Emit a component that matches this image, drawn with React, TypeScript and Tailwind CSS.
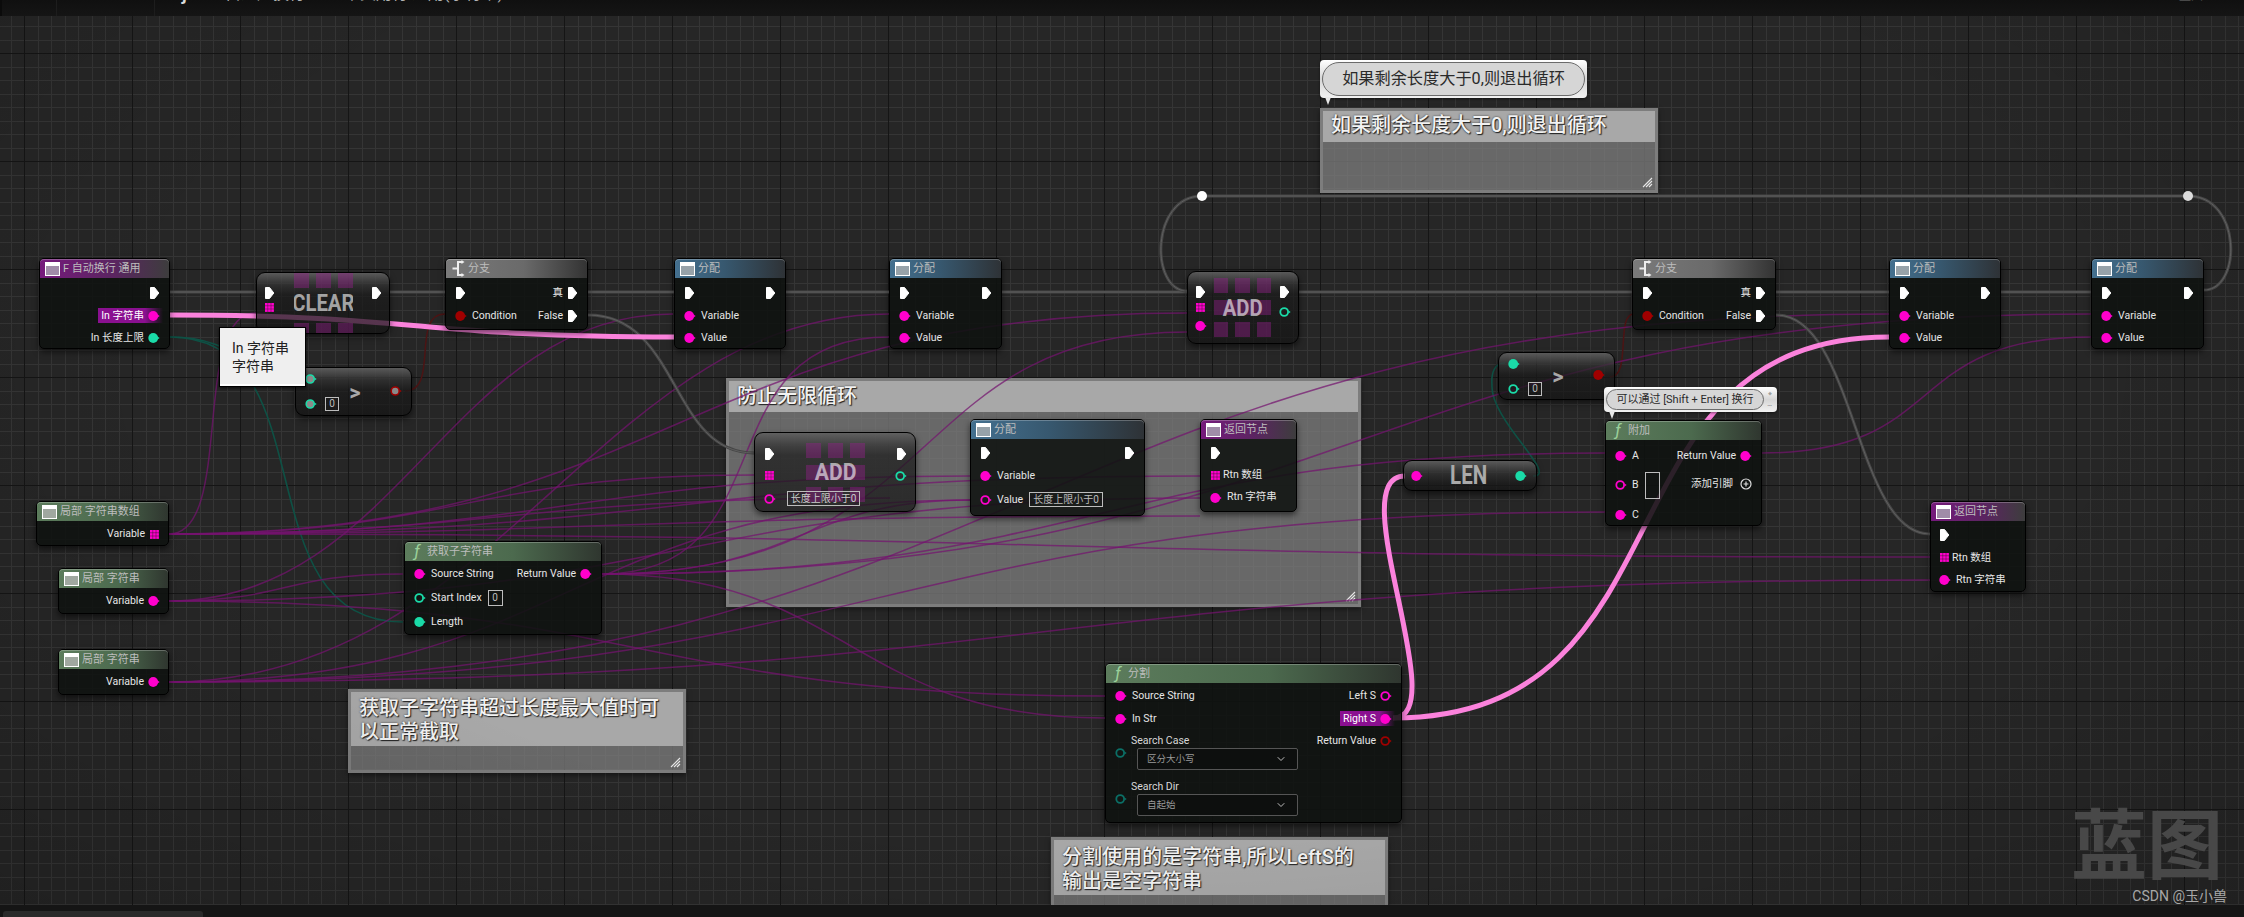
import React from "react";
import { ChevronDown } from "lucide-react";

const MAGENTA = "#ff00cc";
const TEAL = "#1adba8";
const RED = "#a00000";
const DIMTEAL = "#0b6f66";

type PinKind = "exec" | "solid" | "ring" | "gray" | "array" | "plus";

function Pin({ kind, color = MAGENTA }: { kind: PinKind; color?: string }) {
  if (kind === "exec")
    return (
      <svg width="11" height="14" viewBox="0 0 11 14" className="shrink-0">
        <path d="M1.5 1.5H5.5L9.8 7L5.5 12.5H1.5Z" fill="#fff" stroke="#fff" strokeLinejoin="round" />
      </svg>
    );
  if (kind === "array")
    return (
      <svg width="11" height="11" viewBox="0 0 11 11" className="shrink-0">
        {[0, 1, 2].map((r) =>
          [0, 1, 2].map((c) => <rect key={`${r}${c}`} x={1 + c * 3.1} y={1 + r * 3.1} width="2.7" height="2.7" fill={color} />)
        )}
      </svg>
    );
  if (kind === "plus")
    return (
      <svg width="12" height="12" viewBox="0 0 12 12" className="shrink-0">
        <circle cx="6" cy="6" r="5" fill="none" stroke="#ddd" strokeWidth="1.2" />
        <path d="M6 3.6V8.4M3.6 6H8.4" stroke="#ddd" strokeWidth="1.2" />
      </svg>
    );
  return (
    <svg width="12" height="12" viewBox="0 0 12 12" className="shrink-0">
      <path d="M9.6 4.4L11.6 6L9.6 7.6Z" fill={color} />
      {kind === "solid" && <circle cx="5.2" cy="6" r="4.9" fill={color} />}
      {kind === "ring" && <circle cx="5.2" cy="6" r="3.9" fill="none" stroke={color} strokeWidth="1.8" />}
      {kind === "gray" && <circle cx="5.2" cy="6" r="4" fill="#8a8a8a" stroke={color} strokeWidth="1.6" />}
    </svg>
  );
}

function ValueBox({ children, className = "" }: { children?: React.ReactNode; className?: string }) {
  return (
    <div className={`flex items-center justify-center border border-[#bdbdbd] text-[10px] leading-none text-[#bdbdbd] whitespace-nowrap ${className}`}>
      {children}
    </div>
  );
}

function Label({ children, className = "" }: { children: React.ReactNode; className?: string }) {
  return <span className={`text-[10.5px] leading-none text-[#e6e6e6] whitespace-nowrap ${className}`}>{children}</span>;
}

function Row({ children, className = "h-[22.5px]" }: { children: React.ReactNode; className?: string }) {
  return <div className={`flex items-center justify-between ${className}`}>{children}</div>;
}

function In({ kind, color, children }: { kind: PinKind; color?: string; children?: React.ReactNode }) {
  return (
    <div className="flex items-center gap-[5px]">
      <Pin kind={kind} color={color} />
      {children}
    </div>
  );
}

function Out({ kind, color, label, hi }: { kind: PinKind; color?: string; label?: string; hi?: boolean }) {
  return (
    <div
      className={`flex items-center gap-[4px] ${
        hi ? "-mr-[3px] pr-[3px] -ml-[3px] pl-[3px] h-[15px] bg-[linear-gradient(90deg,#8a1090,#8a1090_72%,rgba(138,16,144,0))]" : ""
      }`}
    >
      {label && <Label className={hi ? "text-white" : ""}>{label}</Label>}
      <Pin kind={kind} color={color} />
    </div>
  );
}

const PURPLE = "bg-[linear-gradient(90deg,#761a7c,#5a2560_58%,#3d3d3d)]";
const BLUE = "bg-[linear-gradient(90deg,#44708f,#37586f_45%,#2e3236)]";
const GREEN = "bg-[linear-gradient(90deg,#5c7c5c,#4c6a4e_55%,#2f362f)]";
const GRAY = "bg-[linear-gradient(90deg,#7a7a7a,#6a6a6a_55%,#333)]";

function VarIcon({ body }: { body: string }) {
  return <div className={`w-[15px] h-[14px] shrink-0 border border-white ${body}`} />;
}
const IconPurple = <VarIcon body="bg-[linear-gradient(#fff_24%,#a08ca8_24%)]" />;
const IconBlue = <VarIcon body="bg-[linear-gradient(#fff_24%,#97a2a9_24%)]" />;
const IconGreen = <VarIcon body="bg-[linear-gradient(#fff_24%,#a0a8a0_24%)]" />;
const IconFn = <span className="w-[14px] shrink-0 text-center text-[17px] italic leading-none text-[#9ad09a]">ƒ</span>;
const IconBranch = (
  <svg width="14" height="17" viewBox="0 0 14 17" className="shrink-0">
    <path d="M12 2H7V15H12M7 8.5H1.5" fill="none" stroke="#eee" strokeWidth="2" />
    <path d="M10.5 0L13.5 2L10.5 4ZM10.5 13L13.5 15L10.5 17Z" fill="#eee" />
  </svg>
);

function Node({
  className,
  header,
  icon,
  title,
  body = "pt-1 px-[9px]",
  children,
}: {
  className: string;
  header: string;
  icon: React.ReactNode;
  title: string;
  body?: string;
  children: React.ReactNode;
}) {
  return (
    <div className={`absolute rounded-[5px] border border-black bg-[rgba(15,18,16,0.88)] shadow-[0_3px_6px_rgba(0,0,0,0.55)] ${className}`}>
      <div className={`flex h-[19px] items-center gap-[3px] rounded-t-[4px] pl-[5px] shadow-[inset_0_1px_0_rgba(255,255,255,0.25)] ${header}`}>
        {icon}
        <span className="text-[11px] leading-none text-[#bdbdbd] whitespace-nowrap">{title}</span>
      </div>
      <div className={body}>{children}</div>
    </div>
  );
}

function Compact({ className, children }: { className: string; children: React.ReactNode }) {
  return (
    <div
      className={`absolute flex overflow-hidden rounded-[9px] border border-black bg-[linear-gradient(rgba(95,95,95,0.9),rgba(50,50,50,0.72)_12px,rgba(26,26,26,0.7)_22px,rgba(20,20,20,0.72))] shadow-[0_3px_6px_rgba(0,0,0,0.55)] ${className}`}
    >
      {children}
    </div>
  );
}

function Stripes({ full }: { full?: boolean }) {
  const cell = "bg-[rgba(150,30,140,0.42)]";
  if (full) return <div className={`h-[15px] ${cell}`} />;
  return (
    <div className="grid h-[15px] grid-cols-3 gap-[7px]">
      <div className={cell} />
      <div className={cell} />
      <div className={cell} />
    </div>
  );
}

function Big({ children, className }: { children: React.ReactNode; className: string }) {
  return (
    <span className={`absolute inset-0 flex items-center justify-center font-bold leading-none text-white/60 ${className}`}>{children}</span>
  );
}

function Compare({ className, top, bottom, right }: { className: string; top: PinKind; bottom: PinKind; right: PinKind }) {
  return (
    <Compact className={className}>
      <div className="flex w-[40px] flex-col gap-[12px] pl-[9px] pt-[5px]">
        <Pin kind={top} color={TEAL} />
        <div className="flex w-[50px] items-center gap-[8px]">
          <Pin kind={bottom} color={TEAL} />
          <ValueBox className="h-[14px] w-[14px]">0</ValueBox>
        </div>
      </div>
      <div className="flex flex-1 items-center justify-center pt-[2px] text-[22px] font-bold leading-none text-[#a8a8a8]">&gt;</div>
      <div className="flex w-[37px] items-center pb-[2px] pl-[16px]">
        <Pin kind={right} color={RED} />
      </div>
    </Compact>
  );
}

function Handle() {
  return (
    <svg width="11" height="11" viewBox="0 0 11 11" className="absolute bottom-[2px] right-[2px]">
      <path d="M10 1L1 10M10 4L4 10M10 7L7 10" stroke="#e8e8e8" strokeWidth="1.1" />
    </svg>
  );
}

function Comment({
  className,
  band,
  text,
  children,
}: {
  className: string;
  band: string;
  text: string;
  children: React.ReactNode;
}) {
  return (
    <div className={`absolute border-[3px] border-[#7d7d7d] bg-[rgba(128,128,128,0.74)] shadow-[0_2px_5px_rgba(0,0,0,0.5)] ${className}`}>
      <div
        className={`bg-[#a8a8a8] pl-[8px] font-medium text-[#f2f2f2] [text-shadow:1px_1px_1px_#222,0_0_2px_#333] ${band} ${text}`}
      >
        {children}
      </div>
      <Handle />
    </div>
  );
}

function Bubble({ className, pill, children, side }: { className: string; pill: string; children: React.ReactNode; side?: boolean }) {
  return (
    <div className={`absolute flex items-center rounded-[4px] bg-[linear-gradient(#ffffff,#d6d6d6_50%,#f2f2f2)] p-[2px] shadow-[0_1px_3px_rgba(0,0,0,0.5)] ${className}`}>
      <div className={`flex flex-1 items-center justify-center rounded-full border border-[#6b6b6b] bg-[#d6d6d6] leading-none text-[#2a2a2a] whitespace-nowrap ${pill}`}>
        {children}
      </div>
      {side && (
        <div className="flex w-[11px] flex-col items-center gap-[3px] text-[7px] leading-none text-[#666]">
          <span>⌖</span>
          <span>…</span>
        </div>
      )}
      <div className="absolute -bottom-[7px] left-[5px] h-0 w-0 border-x-[3px] border-t-[8px] border-x-transparent border-t-[#e8e8e8]" />
    </div>
  );
}

const S = (x1: number, y1: number, cx1: number, cx2: number, x2: number, y2: number) =>
  `M${x1},${y1} C${cx1},${y1} ${cx2},${y2} ${x2},${y2}`;

const arr = [169, 534] as const;
const s1 = [169, 601] as const;
const s2 = [169, 682] as const;
const ret = [602, 574] as const;

const purpleWires = [
  S(arr[0], arr[1], 235, 190, 256, 313),
  S(arr[0], arr[1], 678, 678, 1187, 313),
  S(arr[0], arr[1], 460, 460, 754, 475),
  S(arr[0], arr[1], 500, 500, 890, 498),
  S(arr[0], arr[1], 570, 570, 970, 476),
  S(arr[0], arr[1], 600, 600, 1200, 516),
  S(arr[0], arr[1], 680, 680, 1200, 476),
  S(arr[0], arr[1], 1050, 1050, 1930, 557),
  S(s1[0], s1[1], 290, 280, 403, 574),
  S(s1[0], s1[1], 400, 450, 673, 314),
  S(s1[0], s1[1], 640, 640, 1105, 696),
  S(s1[0], s1[1], 680, 680, 1200, 498),
  S(s2[0], s2[1], 500, 600, 889, 314),
  S(s2[0], s2[1], 570, 570, 970, 500),
  S(s2[0], s2[1], 880, 880, 1605, 512),
  S(s2[0], s2[1], 1050, 1050, 1930, 580),
  S(s2[0], s2[1], 1030, 1030, 1889, 314),
  S(ret[0], ret[1], 790, 700, 889, 337),
  S(ret[0], ret[1], 950, 900, 1187, 332),
  S(ret[0], ret[1], 850, 850, 1105, 718),
  S(ret[0], ret[1], 1100, 1100, 1605, 453),
  S(ret[0], ret[1], 1350, 1350, 2091, 314),
  S(ret[0], ret[1], 800, 800, 970, 500),
  S(1762, 453, 1950, 1900, 2091, 337),
];

const grayWires = [
  "M170,292H256",
  "M390,292H445",
  "M588,292H674",
  "M786,292H889",
  "M1002,292H1187",
  "M1299,292H1632",
  "M1776,292H1889",
  "M2001,292H2091",
  "M1202,196H2188",
  "M1202,196 C1150,196 1150,291 1187,291",
  "M2188,196 C2242,196 2242,290 2204,290",
  S(588, 315, 680, 670, 754, 453),
  S(1776, 315, 1855, 1855, 1930, 534),
];

const tealWires = [
  S(170, 337, 330, 240, 403, 622),
  S(170, 337, 240, 250, 300, 378),
  "M1533,476 C1560,476 1490,420 1492,385 C1491,372 1495,363 1505,363",
];

const redWires = [S(405, 391, 440, 410, 445, 314), S(1610, 377, 1632, 1615, 1634, 314)];

const pinkWires = [
  S(170, 315, 420, 420, 674, 337),
  S(1393, 718, 1455, 1340, 1405, 476),
  S(1393, 718, 1700, 1590, 1889, 337),
];

function Wires() {
  return (
    <svg className="absolute left-0 top-0" width="2244" height="917" fill="none">
      {redWires.map((d, i) => (
        <path key={i} d={d} stroke="#4c1414" strokeWidth="1.5" />
      ))}
      {tealWires.map((d, i) => (
        <path key={i} d={d} stroke="#0e5145" strokeWidth="1.6" />
      ))}
      {purpleWires.map((d, i) => (
        <path key={i} d={d} stroke="#75146f" strokeOpacity="0.72" strokeWidth="1.5" />
      ))}
      {grayWires.map((d, i) => (
        <g key={i}>
          <path d={d} stroke="#464646" strokeWidth="3" />
          <path d={d} stroke="#5f5f5f" strokeWidth="1" />
        </g>
      ))}
      {pinkWires.map((d, i) => (
        <path key={i} d={d} stroke="#fb82dc" strokeWidth="5" />
      ))}
    </svg>
  );
}

function Assign({ className }: { className: string }) {
  return (
    <Node className={className} header={BLUE} icon={IconBlue} title="分配">
      <Row>
        <In kind="exec" />
        <Out kind="exec" />
      </Row>
      <Row>
        <In kind="solid">
          <Label>Variable</Label>
        </In>
      </Row>
      <Row>
        <In kind="solid">
          <Label>Value</Label>
        </In>
      </Row>
    </Node>
  );
}

function Branch({ className }: { className: string }) {
  return (
    <Node className={className} header={GRAY} icon={IconBranch} title="分支" body="pt-1 px-[9px]">
      <Row>
        <In kind="exec" />
        <Out kind="exec" label="真" />
      </Row>
      <Row>
        <In kind="solid" color={RED}>
          <Label>Condition</Label>
        </In>
        <Out kind="exec" label="False" />
      </Row>
    </Node>
  );
}

function Local({ className, title, arrayPin }: { className: string; title: string; arrayPin?: boolean }) {
  return (
    <Node className={className} header={GREEN} icon={IconGreen} title={title} body="pt-[2px] pl-[9px] pr-[8px]">
      <Row>
        <span />
        <Out kind={arrayPin ? "array" : "solid"} label="Variable" />
      </Row>
    </Node>
  );
}

function Dropdown({ label, text, className }: { label: string; text: string; className: string }) {
  return (
    <div className={className}>
      <div className="h-[14px] pl-[16px] text-[10.5px] leading-[14px] text-[#d8d8d8] whitespace-nowrap">{label}</div>
      <div className="flex items-center gap-[10px]">
        <div className="-mt-[12px]">
          <Pin kind="ring" color={DIMTEAL} />
        </div>
        <div className="flex h-[22px] w-[161px] items-center justify-between rounded-[2px] border border-[#555] bg-[#0d0f0e] pl-[9px] pr-[10px] text-[9.5px] text-[#9a9a9a]">
          <span>{text}</span>
          <ChevronDown size={12} strokeWidth={2} color="#bdbdbd" />
        </div>
      </div>
    </div>
  );
}

export default function App() {
  return (
    <div className="flex h-[917px] w-[2244px] flex-col overflow-hidden bg-[#151515] font-['Roboto','Noto_Sans_CJK_SC',sans-serif]">
      <div className="flex h-4 shrink-0 items-start overflow-hidden bg-[linear-gradient(#101010,#151515)] text-[#b4b4b4]">
        <div className="h-full w-[2px] bg-[#0b0b0b]" />
        <span className="ml-[13px] -mt-[12px] text-[15px] leading-none">⌂</span>
        <div className="ml-[32px] h-full w-[1px] bg-[#1d1d1d]" />
        <span className="ml-[18px] -mt-[12px] text-[15px] leading-none">›</span>
        <div className="ml-[74px] h-full w-[1px] bg-[#1d1d1d]" />
        <span className="ml-[27px] -mt-[15px] text-[18px] font-bold leading-none text-[#dcdcdc]">ƒ</span>
        <span className="ml-[37px] -mt-[14px] text-[16px] leading-none">自适应换行</span>
        <span className="ml-[39px] -mt-[14px] text-[16px] leading-none">中文用行 通用(字符串)</span>
        <span className="ml-auto mr-[32px] -mt-[10px] text-[12px] leading-none text-[#555]">蓝图 ▾</span>
      </div>

      <div className="relative flex-1 overflow-hidden bg-[#262626]">
        <div className="absolute inset-0 bg-[linear-gradient(#151515_1px,transparent_1px),linear-gradient(90deg,#151515_1px,transparent_1px),linear-gradient(#353535_1px,transparent_1px_14px,#353535_14px_15px,transparent_15px),linear-gradient(90deg,#353535_1px,transparent_1px_14px,#353535_14px_15px,transparent_15px)] bg-[size:108px_108px,108px_108px,27px_27px,27px_27px] bg-[position:24px_37px,24px_37px,24px_10px,24px_10px]" />

        <div className="absolute left-0 -top-4 h-[917px] w-[2244px]">
          <Comment className="left-[1320px] top-[108px] h-[85px] w-[338px]" band="h-[31px]" text="text-[20px] leading-[29px]">
            如果剩余长度大于0,则退出循环
          </Comment>
          <Comment className="left-[726px] top-[378px] h-[229px] w-[635px]" band="h-[31px]" text="text-[20px] leading-[30px]">
            防止无限循环
          </Comment>
          <Comment className="left-[348px] top-[689px] h-[84px] w-[338px]" band="h-[54px] pt-[4px]" text="text-[20px] leading-[24px]">
            获取子字符串超过长度最大值时可
            <br />
            以正常截取
          </Comment>
          <Comment className="left-[1051px] top-[837px] h-[90px] w-[337px]" band="h-[55px] pt-[5px]" text="text-[20px] leading-[24px]">
            分割使用的是字符串,所以LeftS的
            <br />
            输出是空字符串
          </Comment>

          <div className="absolute inset-0 bg-[radial-gradient(ellipse_at_50%_40%,rgba(0,0,0,0)_60%,rgba(0,0,0,0.16)_100%)]" />

          <Wires />

          <div className="absolute left-[1197px] top-[191px] h-[10px] w-[10px] rounded-full bg-white" />
          <div className="absolute left-[2183px] top-[191px] h-[10px] w-[10px] rounded-full bg-[#dcdcdc]" />

          <Node className="left-[39px] top-[258px] h-[91px] w-[131px]" header={PURPLE} icon={IconPurple} title="F 自动换行 通用">
            <Row>
              <span />
              <Out kind="exec" />
            </Row>
            <Row>
              <span />
              <Out kind="solid" label="In 字符串" hi />
            </Row>
            <Row>
              <span />
              <Out kind="solid" color={TEAL} label="In 长度上限" />
            </Row>
          </Node>

          <Compact className="left-[256px] top-[272px] h-[62px] w-[134px]">
            <div className="mr-[13px] flex w-[24px] flex-col items-center gap-[2px] pt-[13px]">
              <Pin kind="exec" />
              <Pin kind="array" />
            </div>
            <div className="relative flex h-full w-[59px] flex-col justify-between overflow-hidden">
              <Stripes />
              <div className="-mb-[5px]">
                <Stripes />
              </div>
              <Big className="text-[23px]">
                <span className="inline-block scale-x-[0.88]">CLEAR</span>
              </Big>
            </div>
            <div className="pl-[18px] pt-[13px]">
              <Pin kind="exec" />
            </div>
          </Compact>

          <Compare className="left-[295px] top-[367px] h-[49px] w-[117px]" top="gray" bottom="gray" right="gray" />

          <Branch className="left-[445px] top-[258px] h-[72px] w-[143px]" />
          <Assign className="left-[674px] top-[258px] h-[91px] w-[112px]" />
          <Assign className="left-[889px] top-[258px] h-[91px] w-[113px]" />

          <Compact className="left-[1187px] top-[271px] h-[73px] w-[112px]">
            <div className="flex w-[26px] flex-col items-center pt-[13px]">
              <Pin kind="exec" />
              <div className="mt-[3px]">
                <Pin kind="array" />
              </div>
              <div className="mt-[7px]">
                <Pin kind="solid" />
              </div>
            </div>
            <div className="relative flex h-full w-[59px] flex-col gap-[7px] pt-[6px]">
              <Stripes />
              <Stripes full />
              <Stripes />
              <Big className="pt-[1px] text-[23px]">
                <span className="inline-block scale-x-[0.88]">ADD</span>
              </Big>
            </div>
            <div className="flex w-[27px] flex-col items-center gap-[7px] pt-[13px]">
              <Pin kind="exec" />
              <Pin kind="ring" color={TEAL} />
            </div>
          </Compact>

          <Compact className="left-[754px] top-[432px] h-[80px] w-[162px]">
            <div className="flex w-[51px] flex-col gap-[9px] pl-[9px] pt-[14px]">
              <Pin kind="exec" />
              <Pin kind="array" />
              <div className="relative z-10 mt-[1px] flex w-[120px] items-center gap-[11px]">
                <Pin kind="ring" />
                <ValueBox className="h-[15px] w-[73px] text-[#ccc]">长度上限小于0</ValueBox>
              </div>
            </div>
            <div className="relative flex h-full w-[59px] flex-col gap-[7px] pt-[10px]">
              <Stripes />
              <Stripes full />
              <Stripes />
              <Big className="text-[24px]">
                <span className="inline-block scale-x-[0.88]">ADD</span>
              </Big>
            </div>
            <div className="flex flex-col items-center gap-[9px] pl-[30px] pt-[14px]">
              <Pin kind="exec" />
              <Pin kind="ring" color={TEAL} />
            </div>
          </Compact>

          <Node className="left-[970px] top-[419px] h-[97px] w-[175px]" header={BLUE} icon={IconBlue} title="分配" body="px-[9px] pt-[2px]">
            <Row className="h-[23.5px]">
              <In kind="exec" />
              <Out kind="exec" />
            </Row>
            <Row className="h-[23.5px]">
              <In kind="solid">
                <Label>Variable</Label>
              </In>
            </Row>
            <Row className="h-[23.5px]">
              <In kind="ring">
                <Label>Value</Label>
                <ValueBox className="ml-[1px] h-[15px] w-[74px]">长度上限小于0</ValueBox>
              </In>
            </Row>
          </Node>

          <Node className="left-[1200px] top-[419px] h-[93px] w-[97px]" header={PURPLE} icon={IconPurple} title="返回节点" body="px-[9px] pt-[2px]">
            <Row className="h-[23px]">
              <In kind="exec" />
            </Row>
            <Row className="h-[23px]">
              <div className="flex items-center gap-[2px]">
                <Pin kind="array" />
                <Label>Rtn 数组</Label>
              </div>
            </Row>
            <Row className="h-[21px]">
              <In kind="solid">
                <Label>Rtn 字符串</Label>
              </In>
            </Row>
          </Node>

          <Node className="left-[404px] top-[541px] h-[94px] w-[198px]" header={GREEN} icon={IconFn} title="获取子字符串" body="px-[9px] pt-[1px]">
            <Row className="h-[24px]">
              <In kind="solid">
                <Label>Source String</Label>
              </In>
              <Out kind="solid" label="Return Value" />
            </Row>
            <Row className="h-[24px]">
              <In kind="ring" color={TEAL}>
                <Label>Start Index</Label>
                <ValueBox className="ml-[1px] h-[16px] w-[15px]">0</ValueBox>
              </In>
            </Row>
            <Row className="h-[24px]">
              <In kind="solid" color={TEAL}>
                <Label>Length</Label>
              </In>
            </Row>
          </Node>

          <Local className="left-[36px] top-[501px] h-[45px] w-[133px]" title="局部 字符串数组" arrayPin />
          <Local className="left-[58px] top-[568px] h-[46px] w-[111px]" title="局部 字符串" />
          <Local className="left-[58px] top-[649px] h-[46px] w-[111px]" title="局部 字符串" />

          <Node className="left-[1105px] top-[663px] h-[160px] w-[297px]" header={GREEN} icon={IconFn} title="分割" body="px-[9px] pt-[2px]">
            <Row>
              <In kind="solid">
                <Label>Source String</Label>
              </In>
              <Out kind="ring" label="Left S" />
            </Row>
            <Row>
              <In kind="solid">
                <Label>In Str</Label>
              </In>
              <Out kind="solid" label="Right S" hi />
            </Row>
            <div className="flex justify-between pt-[4px]">
              <div>
                <Dropdown label="Search Case" text="区分大小写" className="" />
                <Dropdown label="Search Dir" text="自起始" className="mt-[10px]" />
              </div>
              <div className="flex h-[14px] items-center">
                <Out kind="ring" color={RED} label="Return Value" />
              </div>
            </div>
          </Node>

          <Compact className="left-[1403px] top-[460px] h-[31px] w-[134px] items-center justify-between px-[7px]">
            <Pin kind="solid" />
            <span className="inline-block scale-x-[0.82] text-[25px] font-bold leading-none text-[#aaaaaa]">LEN</span>
            <div className="pr-[2px]">
              <Pin kind="solid" color={TEAL} />
            </div>
          </Compact>

          <Compare className="left-[1498px] top-[352px] h-[48px] w-[117px]" top="solid" bottom="ring" right="solid" />

          <Branch className="left-[1632px] top-[258px] h-[72px] w-[144px]" />
          <Assign className="left-[1889px] top-[258px] h-[91px] w-[112px]" />
          <Assign className="left-[2091px] top-[258px] h-[91px] w-[113px]" />

          <Node className="left-[1605px] top-[420px] h-[106px] w-[157px]" header={GREEN} icon={IconFn} title="附加" body="px-[9px]">
            <div className="flex justify-between">
              <div className="flex flex-col">
                <Row className="h-[30px] pt-[2px]">
                  <In kind="solid">
                    <Label>A</Label>
                  </In>
                </Row>
                <Row className="h-[30px]">
                  <In kind="ring">
                    <Label>B</Label>
                    <ValueBox className="ml-[1px] h-[27px] w-[15px]" />
                  </In>
                </Row>
                <Row className="h-[30px]">
                  <In kind="solid">
                    <Label>C</Label>
                  </In>
                </Row>
              </div>
              <div className="flex flex-col items-end">
                <Row className="h-[30px] pt-[2px]">
                  <Out kind="solid" label="Return Value" />
                </Row>
                <Row className="h-[28px] gap-[7px]">
                  <Label>添加引脚</Label>
                  <Pin kind="plus" />
                </Row>
              </div>
            </div>
          </Node>

          <Node className="left-[1930px] top-[501px] h-[91px] w-[96px]" header={PURPLE} icon={IconPurple} title="返回节点" body="px-[8px] pt-[3px]">
            <Row>
              <In kind="exec" />
            </Row>
            <Row>
              <div className="flex items-center gap-[2px]">
                <Pin kind="array" />
                <Label>Rtn 数组</Label>
              </div>
            </Row>
            <Row>
              <In kind="solid">
                <Label>Rtn 字符串</Label>
              </In>
            </Row>
          </Node>

          <Bubble className="left-[1320px] top-[60px] h-[38px] w-[267px]" pill="h-full text-[16.2px]">
            如果剩余长度大于0,则退出循环
          </Bubble>
          <Bubble className="left-[1604px] top-[387px] h-[25px] w-[173px]" pill="h-full text-[11px]" side>
            可以通过 [Shift + Enter] 换行
          </Bubble>

          <div className="absolute left-[219px] top-[327px] h-[60px] w-[87px] border border-black bg-[#efefef] pl-[12px] pt-[11px] text-[14px] leading-[18.3px] text-[#222] shadow-[inset_0_-2px_0_#fff,0_1px_3px_rgba(0,0,0,0.7)]">
            In 字符串
            <br />
            字符串
          </div>
        </div>

        <div className="absolute bottom-[22px] right-[21px] text-[76px] font-bold leading-[72px] text-[#484848]">蓝图</div>
        <div className="absolute bottom-0 right-[17px] text-[14px] leading-[18px] text-[#a8a8a8]">CSDN @玉小兽</div>
      </div>

      <div className="h-3 shrink-0 bg-[#151515] pl-[3px] pt-[6px]">
        <div className="h-[6px] w-[200px] rounded-t-[3px] bg-[#2a2a2a]" />
      </div>
    </div>
  );
}
